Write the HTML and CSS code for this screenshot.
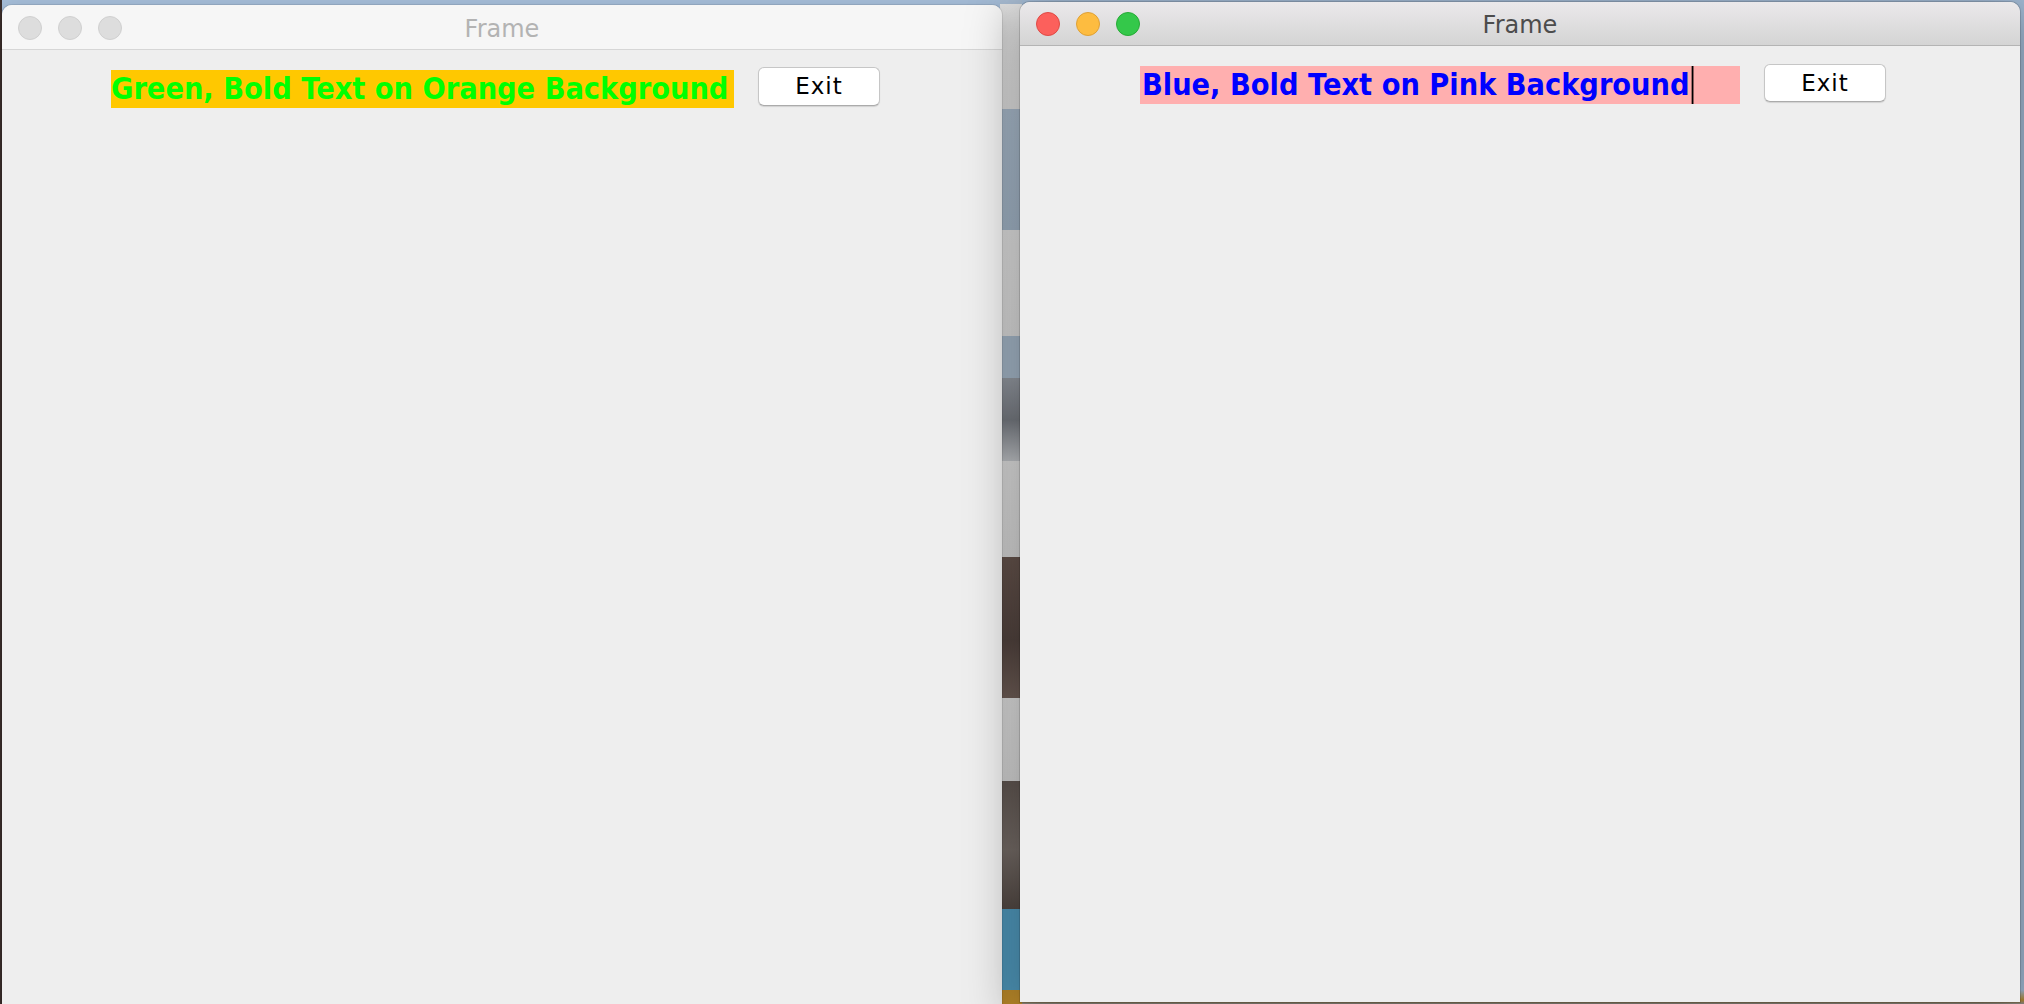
FILE: index.html
```html
<!DOCTYPE html>
<html lang="en">
<head>
<meta charset="utf-8">
<title>Frames</title>
<link rel="stylesheet" href="styles.css">
</head>
<body>
<div class="desktop">
  <div class="wallpaper-strip"></div>

  <div class="window window-inactive win-left">
    <div class="titlebar">
      <div class="lights">
        <span class="light"></span>
        <span class="light"></span>
        <span class="light"></span>
      </div>
      <div class="title">Frame</div>
    </div>
    <div class="content">
      <div class="label label-orange"><span class="txt">Green, Bold Text on Orange Background</span></div>
      <button class="btn">Exit</button>
    </div>
  </div>

  <div class="window window-active win-right">
    <div class="titlebar">
      <div class="lights">
        <span class="light light-close"></span>
        <span class="light light-min"></span>
        <span class="light light-max"></span>
      </div>
      <div class="title">Frame</div>
    </div>
    <div class="content">
      <div class="label label-pink"><span class="txt">Blue, Bold Text on Pink Background<span class="caret"></span></span></div>
      <button class="btn">Exit</button>
    </div>
  </div>
</div>
</body>
</html>
```

FILE: styles.css
```css
* { box-sizing: border-box; }

html, body {
  margin: 0;
  padding: 0;
  width: 2024px;
  height: 1004px;
  overflow: hidden;
}

body {
  font-family: "DejaVu Sans", "Liberation Sans", sans-serif;
  background: #a3bcd7;
}

.desktop {
  position: relative;
  width: 2024px;
  height: 1004px;
  background:
    linear-gradient(to right, #3a2d2a 0, #3a2d2a 2px, transparent 2px),
    linear-gradient(to bottom, #a5bdd8 0, #a5bdd8 990px, #b58a32 1000px, #8d8d8d 1004px);
}

.wallpaper-strip {
  position: absolute;
  left: 1000px;
  top: 0;
  width: 22px;
  height: 1004px;
  background: linear-gradient(to bottom,
    #a9bdd3 0, #a9bdd3 4px,
    #e6e6e6 4px, #e0e0e0 109px,
    #aabbcc 109px, #a3b5c7 230px,
    #e2e2e2 230px, #dcdcdc 336px,
    #a6b8c9 336px, #a6b8c9 378px,
    #959aa2 378px, #777b82 420px, #c0c3c7 461px,
    #e0e0e0 461px, #d8d8d8 557px,
    #66544d 557px, #52443f 640px, #6f5e57 698px,
    #e0e0e0 698px, #d8d8d8 781px,
    #625853 781px, #766d68 850px, #544a45 909px,
    #519bbf 909px, #519bbf 990px,
    #c28f2c 990px, #c28f2c 1004px);
}

/* Windows */
.window {
  position: absolute;
  width: 1000px;
  display: flex;
  flex-direction: column;
  background: #eeeeee;
  border-radius: 10px 10px 0 0;
  overflow: hidden;
}

.win-left {
  left: 2px;
  top: 5px;
  height: 1010px;
  box-shadow: 0 0 0 1px rgba(0, 0, 0, 0.08), 0 6px 20px rgba(0, 0, 0, 0.18);
}

.win-right {
  left: 1020px;
  top: 2px;
  height: 1000px;
  box-shadow: 0 0 0 1px rgba(0, 0, 0, 0.14), 0 10px 48px 6px rgba(0, 0, 0, 0.34);
}

/* Title bar */
.titlebar {
  display: grid;
  grid-template-columns: 1fr;
  flex: none;
}

.titlebar > * {
  grid-row: 1;
  grid-column: 1;
}

.window-inactive .titlebar {
  height: 45px;
  background: #f6f6f6;
  border-bottom: 1px solid #d6d6d6;
}

.window-active .titlebar {
  height: 44px;
  background: linear-gradient(to bottom, #ebe9eb, #d4d4d4);
  border-bottom: 1px solid #b4b4b4;
}

.lights {
  justify-self: start;
  align-self: start;
  display: flex;
  gap: 16px;
}

.window-inactive .lights { margin: 11px 0 0 16px; }
.window-active .lights { margin: 10px 0 0 16px; }

.light {
  width: 24px;
  height: 24px;
  border-radius: 50%;
  background: #dddddd;
  border: 1px solid #d0d0d0;
}

.light-close { background: #fc605c; border-color: #de4a45; }
.light-min { background: #fdbc40; border-color: #dea036; }
.light-max { background: #34c84a; border-color: #27aa36; }

.title {
  justify-self: center;
  align-self: start;
  font-size: 24px;
  line-height: 28px;
}

.window-inactive .title { color: #b3b3b3; margin-top: 10px; }
.window-active .title { color: #4c4c4c; margin-top: 9px; }

/* Content */
.content {
  flex: 1;
  display: flex;
  align-items: flex-start;
  gap: 24px;
}

.win-left .content { padding: 20px 0 0 109px; }
.win-right .content { padding: 20px 0 0 120px; }

.label {
  height: 38px;
  font-size: 30px;
  font-weight: bold;
  line-height: 38px;
  white-space: nowrap;
}

.label-orange {
  width: 623px;
  background: #ffc800;
  color: #00ff00;
}

.label-pink {
  width: 600px;
  background: #ffafaf;
  color: #0000ff;
  padding-left: 2px;
}

.txt {
  display: inline-flex;
  align-items: stretch;
  height: 38px;
  transform: scaleX(0.91);
  transform-origin: 0 50%;
}

.caret {
  width: 2px;
  margin-left: 2px;
  background: #000;
}

.btn {
  width: 122px;
  height: 39px;
  padding: 0;
  margin-top: -3px;
  background: #ffffff;
  border: 1px solid #c6c6c6;
  border-bottom-color: #ababab;
  border-radius: 6px;
  box-shadow: 0 1px 1px rgba(0, 0, 0, 0.12);
  font-family: "DejaVu Sans", "Liberation Sans", sans-serif;
  font-size: 23px;
  letter-spacing: 1px;
  line-height: 37px;
  color: #000;
  text-align: center;
}

.win-right .btn { margin-top: -2px; height: 38px; line-height: 36px; }
```
